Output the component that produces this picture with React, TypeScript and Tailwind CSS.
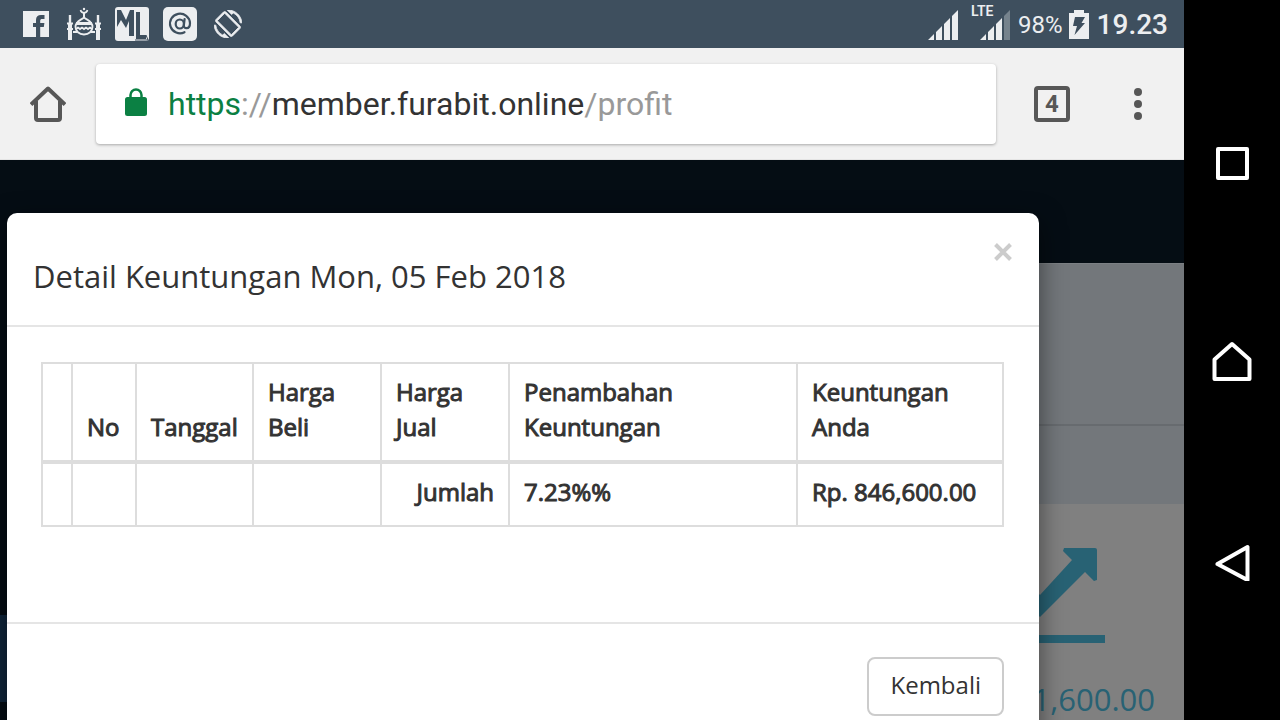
import type { ReactNode } from "react";

const columns = [
  { label: "", width: "w-[30px]" },
  { label: "No", width: "w-[64px]" },
  { label: "Tanggal", width: "w-[117px]" },
  { label: "Harga Beli", width: "w-[128px]" },
  { label: "Harga Jual", width: "w-[128px]" },
  { label: "Penambahan Keuntungan", width: "w-[288px]" },
  { label: "Keuntungan Anda", width: "" },
];

function FacebookIcon() {
  return (
    <svg viewBox="0 0 26 26" className="size-[26px]">
      <path d="M0 0h26v26H0z" fill="#eceef0" />
      <path d="M13 26V16h-3v-4h3V9c0-3.200 1.900-5 5-5h3.500v4h-2.200c-1.500 0-2.100.6-2.100 2v2h4.200l-.6 4h-3.600v10z" fill="#3e4f5e" />
    </svg>
  );
}

function MosqueIcon() {
  return (
    <svg viewBox="0 0 34 34" className="size-[34px]" fill="none" stroke="#eceef0">
      <circle cx="17" cy="2" r="1.200" fill="#eceef0" stroke="none" />
      <path d="M13.500 3a3.600 3.600 0 0 0 7 0" strokeWidth="1.600" />
      <path d="M17 6v5" strokeWidth="2" />
      <path d="M8.500 20c0-6 5-6.500 8.500-9.500 3.500 3 8.500 3.500 8.500 9.500 0 4-3.500 7.500-8.500 7.500S8.500 24 8.500 20z" strokeWidth="1.800" />
      <path d="M9 16.500h16" strokeWidth="3" />
      <path d="M9 22l2-1.500 2 1.500 2-1.500 2 1.500 2-1.500 2 1.500 2-1.500 2 1.500" strokeWidth="1.800" />
      <path d="M3 8v25M31 8v25" strokeWidth="2.400" />
      <path d="M3 16v17M31 16v17" strokeWidth="4" />
      <path d="M0 16.500h6M28 16.500h6M0 22h6M28 22h6M6 25h4M24 25h4" strokeWidth="1.800" />
    </svg>
  );
}

function LeagueIcon() {
  return (
    <svg viewBox="0 0 34 34" className="size-[34px]">
      <rect width="34" height="34" rx="3" fill="#eceef0" />
      <path d="M2 3h4l5 10 4-10h4v26h-5V14l-3 7-5-8-4 7z" fill="#3e4f5e" />
      <path d="M21 5h4v23h6v4H21z" fill="#3e4f5e" />
      <path d="M31 28l2 5H20" fill="none" stroke="#3e4f5e" />
    </svg>
  );
}

function AtIcon() {
  return (
    <svg viewBox="0 0 34 34" className="size-[34px]">
      <rect width="34" height="34" rx="5" fill="#eceef0" />
      <g fill="none" stroke="#3e4f5e" strokeWidth="2.200" strokeLinecap="round">
        <path d="M21.500 25.200A10 9.800 0 1 1 27 16c0 3.500-1.300 5.200-3.400 5.200-2 0-2.900-1.200-2.700-3.200l.7-6" />
        <ellipse cx="16.800" cy="17" rx="4.100" ry="4.500" />
      </g>
    </svg>
  );
}

function RotateIcon() {
  return (
    <svg viewBox="0 0 24 24" className="size-7" fill="#eceef0" stroke="#eceef0" strokeWidth="0.7">
      <path d="M16.480 2.520c3.270 1.550 5.610 4.720 5.970 8.480h1.500C23.440 4.840 18.290 0 12 0l-.66.030 3.810 3.810 1.330-1.320zm-6.250-.770c-.59-.59-1.540-.59-2.120 0L1.750 8.110c-.59.59-.59 1.540 0 2.120l12.020 12.020c.59.59 1.540.59 2.120 0l6.360-6.360c.59-.59.59-1.540 0-2.120L10.230 1.750zm4.600 19.440L2.810 9.170l6.360-6.360 12.020 12.020-6.360 6.360zm-7.310.290C4.250 19.940 1.910 16.760 1.550 13H.05C.56 19.160 5.710 24 12 24l.66-.030-3.810-3.810-1.330 1.320z" />
    </svg>
  );
}

function SignalIcon({ weak }: { weak?: boolean }) {
  return (
    <svg viewBox="0 0 30 30" className="size-[30px]" fill="#eceef0">
      <path d="M0 30l6-6v6zM8 30v-8l6-6v14zM16 30V14l6-6v22z" />
      <path d="M24 30V6l6-6v30z" fill={weak ? "#76838d" : "#eceef0"} />
    </svg>
  );
}

function StatusBar() {
  return (
    <header className="flex h-12 shrink-0 items-center justify-between bg-[#3e4f5e] pr-4 pl-[23px] text-[#eceef0]">
      <div className="flex items-center gap-[18px]">
        <FacebookIcon />
        <div className="flex items-center gap-[14px]">
          <MosqueIcon />
          <LeagueIcon />
          <AtIcon />
          <div className="pl-[3px]">
            <RotateIcon />
          </div>
        </div>
      </div>
      <div className="flex items-center">
        <div className="pt-[2px]">
          <SignalIcon />
        </div>
        <div className="relative ml-[22px] pt-[2px]">
          <SignalIcon weak />
          <span className="absolute -top-[7px] -left-[9px] text-sm leading-5 font-semibold">LTE</span>
        </div>
        <span className="ml-2 pt-[2px] text-2xl">98%</span>
        <svg viewBox="0 0 20 29" className="ml-[6px] h-[29px] w-5">
          <path d="M5 0h10v3h5v26H0V3h5z" fill="#eceef0" />
          <path d="M6 7h10l-3.500 6H16L5.500 25 8 16H4z" fill="#3e4f5e" />
        </svg>
        <time className="ml-2 pt-[2px] text-[28px] font-medium">19.23</time>
      </div>
    </header>
  );
}

function BrowserBar() {
  return (
    <div className="flex h-28 shrink-0 items-center border-b border-[#e4e4e4] bg-[#f1f1f1]">
      <button aria-label="Home" className="flex w-24 justify-center">
        <svg viewBox="0 0 36 36" className="size-9" fill="none" stroke="#575757" strokeWidth="4">
          <path d="M1 18.500 18 2.500l17 16" strokeLinejoin="round" />
          <path d="M6 15v17q0 2 2 2h20q2 0 2-2V15" />
        </svg>
      </button>
      <div className="flex h-20 flex-1 items-center rounded-sm bg-white pl-[29px] shadow-[0_1px_3px_rgba(0,0,0,0.3)]">
        <svg viewBox="0 0 22 28" className="mb-1 h-7 w-[22px]">
          <path d="M5.500 12V7a5.500 5.500 0 0 1 11 0v5" fill="none" stroke="#0b8043" strokeWidth="2.500" />
          <rect y="9" width="22" height="19" rx="2.500" fill="#0b8043" />
        </svg>
        <div
          role="textbox"
          aria-label="Address"
          contentEditable
          suppressContentEditableWarning
          className="ml-[21px] flex-1 text-[32px] leading-10 whitespace-nowrap text-[#999] outline-none"
        >
          <span className="text-[#0b8043]">https</span>://<span className="text-[#333]">member.furabit.online</span>/profit
        </div>
      </div>
      <button
        aria-label="Tabs"
        className="ml-[38px] flex size-9 items-center justify-center rounded-sm border-4 border-[#575757] text-2xl font-bold text-[#575757]"
      >
        4
      </button>
      <button aria-label="Menu" className="ml-16 box-content w-2 pr-[42px]">
        <svg viewBox="0 0 8 32" className="h-8 w-2" fill="#575757">
          <circle cx="4" cy="4" r="4" />
          <circle cx="4" cy="16" r="4" />
          <circle cx="4" cy="28" r="4" />
        </svg>
      </button>
    </div>
  );
}

function Backdrop() {
  return (
    <div className="flex h-full bg-[#050d14]">
      <div className="flex w-24 flex-col pt-[455px]">
        <div className="h-[87px] shrink-0 bg-[#10263c]" />
      </div>
      <div className="flex flex-1 flex-col">
        <div className="h-[103px] shrink-0" />
        <div className="h-[163px] shrink-0 border-t border-b-2 border-t-[#7c8084] border-b-[#676b6f] bg-[#73777b]" />
        <div className="h-[78px] shrink-0 bg-[#73777b]" />
        <div className="flex flex-1 flex-col items-end bg-[#808080] pt-[43px] pr-[29px]">
          <svg viewBox="0 0 140 96" className="mr-[50px] h-24 w-[140px] shrink-0" fill="#286274">
            <path d="M99 1h31q2 0 2 2v30l-3 1-9-9-45 45-22-22-23 23-11-11L53 26l22 22 32-35-9-9z" />
            <path d="M0 88h140v8H0z" />
          </svg>
          <p className="mt-[35px] text-[31px] leading-[42px] text-[#286274]">1,600.00</p>
        </div>
      </div>
    </div>
  );
}

function ProfitTable() {
  return (
    <table className="w-full table-fixed border-collapse border-2 border-[#ddd] text-left">
      <thead>
        <tr className="border-b-4 border-[#ddd]">
          {columns.map((col, i) => (
            <th
              key={i}
              className={`${col.width} border-x-2 border-[#ddd] px-[14px] pt-[10px] pb-4 align-bottom font-normal [-webkit-text-stroke:1px_#333]`}
            >
              {col.label}
            </th>
          ))}
        </tr>
      </thead>
      <tbody className="[-webkit-text-stroke:1px_#333]">
        <tr>
          <td className="border-2 border-[#ddd]" />
          <td className="border-2 border-[#ddd]" />
          <td className="border-2 border-[#ddd]" />
          <td className="border-2 border-[#ddd]" />
          <td className="border-2 border-[#ddd] px-[14px] pt-[10px] pb-4 text-right">Jumlah</td>
          <td className="border-2 border-[#ddd] px-[14px] pt-[10px] pb-4">7.23%%</td>
          <td className="border-2 border-[#ddd] px-[14px] pt-[10px] pb-4 whitespace-nowrap">Rp. 846,600.00</td>
        </tr>
      </tbody>
    </table>
  );
}

function ProfitDialog() {
  return (
    <section
      role="dialog"
      aria-labelledby="profit-title"
      className="absolute top-[53px] right-[145px] left-[7px] rounded-[10px] bg-white text-2xl leading-[35px] text-[#333] shadow-[0_8px_26px_rgba(0,0,0,0.5)]"
    >
      <div className="flex h-[114px] items-start justify-between border-b-2 border-[#e5e5e5] px-[26px] pt-[26px]">
        <h4 id="profit-title" className="pt-[14px] text-[31px] leading-[46px]">
          Detail Keuntungan Mon, 05 Feb 2018
        </h4>
        <button aria-label="Close" className="mt-[3px] flex size-5 items-center justify-center">
          <svg viewBox="0 0 18 18" className="size-[18px]" fill="none" stroke="#ccc" strokeWidth="4">
            <path d="m1.500 1.500 15 15m0-15-15 15" />
          </svg>
        </button>
      </div>
      <div className="h-[295px] pt-[35px] pr-[35px] pl-[34px]">
        <ProfitTable />
      </div>
      <div className="flex h-[148px] items-start justify-end border-t-2 border-[#e5e5e5] px-[35px] pt-[33px]">
        <button className="h-[59px] rounded-lg border-2 border-[#ccc] px-[21px] pb-1">Kembali</button>
      </div>
    </section>
  );
}

function NavButton({ label, children }: { label: string; children: ReactNode }) {
  return (
    <button aria-label={label} className="flex h-[200px] items-center justify-center pt-[2px]">
      <svg viewBox="0 0 40 40" className="size-10" fill="none" stroke="#fff" strokeWidth="4" strokeLinejoin="round">
        {children}
      </svg>
    </button>
  );
}

export default function App() {
  return (
    <div className="flex h-screen overflow-hidden bg-black font-[Roboto,sans-serif]">
      <main className="flex min-w-0 flex-1 flex-col">
        <StatusBar />
        <BrowserBar />
        <div className="relative flex-1 overflow-hidden font-['Open_Sans',sans-serif]">
          <Backdrop />
          <ProfitDialog />
        </div>
      </main>
      <nav className="flex w-24 flex-col justify-center">
        <NavButton label="Recent apps">
          <path d="M6 8h29v29H6z" />
        </NavButton>
        <NavButton label="Home">
          <path d="M20 3 37.500 18.500V38H2.500V18.500z" />
        </NavButton>
        <NavButton label="Back">
          <path d="M5.500 23 35.500 6v33z" />
        </NavButton>
      </nav>
    </div>
  );
}
